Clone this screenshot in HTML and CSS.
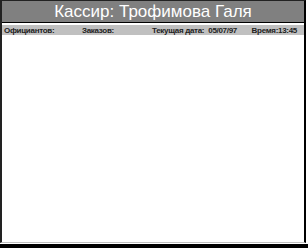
FILE: index.html
```html
<!DOCTYPE html>
<html>
<head>
  <meta charset="utf-8">
  <title>Кассир</title>
  <link rel="stylesheet" href="styles.css">
</head>
<body>
  <div class="window">
    <div class="title">Кассир: Трофимова Галя</div>
    <div class="info">
      <span class="waiters">Официантов:</span>
      <span class="orders">Заказов:</span>
      <span class="date">Текущая дата:</span>
      <span class="date-value">05/07/97</span>
      <span class="time">Время:13:45</span>
    </div>
    <div class="content"></div>
  </div>
  <div class="bottom"></div>
</body>
</html>
```
FILE: styles.css
```css
body {
  margin: 0;
  padding: 0;
  width: 308px;
  height: 248px;
  background-color: #fff;
  font-family: "Liberation Sans", Arial, sans-serif;
  overflow: hidden;
}

.window {
  width: 302px;
  height: 241px;
  border-top: 1px solid #222;
  border-left: 2px solid #222;
  border-right: 2px solid #000;
  border-bottom: 1px solid #c0c0c0;
  display: flex;
  flex-direction: column;
  background-color: #fff;
}

.title {
  height: 21px;
  line-height: 22px;
  background-color: #808080;
  color: #fff;
  font-size: 17px;
  text-align: center;
  border-bottom: 1px solid #000;
}

.info {
  margin-top: 2px;
  height: 10px;
  background-color: #c0c0c0;
  display: flex;
  align-items: center;
  font-size: 8px;
  font-weight: bold;
  letter-spacing: -0.3px;
  color: #222;
  white-space: nowrap;
}

.waiters {
  margin-left: 2px;
  width: 78px;
}

.orders {
  width: 70px;
}

.date-value {
  margin-left: 4px;
}

.time {
  margin-left: auto;
  margin-right: 7px;
}

.content {
  flex: 1;
}

.bottom {
  height: 5px;
  margin-top: 1px;
  background-color: #000;
}
```
